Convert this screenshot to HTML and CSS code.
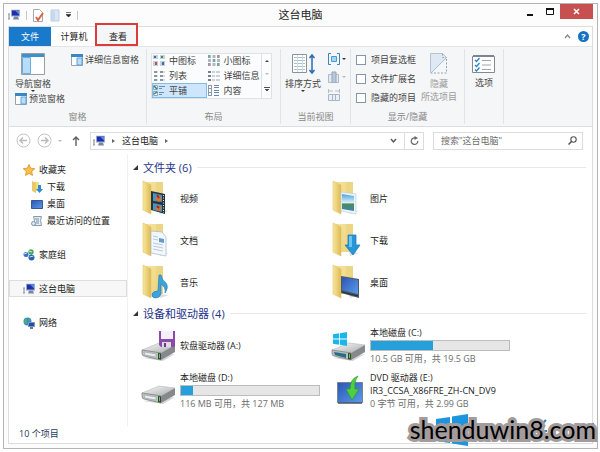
FILE: index.html
```html
<!DOCTYPE html>
<html lang="zh-CN">
<head>
  <meta charset="UTF-8">
  <title>这台电脑</title>
  <link rel="stylesheet" href="styles.css">
</head>
<body>
  <svg class="defs" aria-hidden="true">
    <defs>
      <linearGradient id="gold" x1="0" x2="1"><stop offset="0" stop-color="#f9e79b"/><stop offset="1" stop-color="#dcb954"/></linearGradient>
      <linearGradient id="gold2" x1="0" x2="1" y2="1"><stop offset="0" stop-color="#f5e3a0"/><stop offset="1" stop-color="#eed27a"/></linearGradient>
      <linearGradient id="metal" x1="0" y1="0" x2="1" y2="1"><stop offset="0" stop-color="#fafafa"/><stop offset="1" stop-color="#a9acac"/></linearGradient>
      <linearGradient id="blue" x1="0" y1="0" x2="1" y2="1"><stop offset="0" stop-color="#2b55b4"/><stop offset="1" stop-color="#5a9bea"/></linearGradient>
      <linearGradient id="sky" x1="0" y1="0" x2="0" y2="1"><stop offset="0" stop-color="#4ba3dd"/><stop offset=".5" stop-color="#d8effa"/><stop offset=".6" stop-color="#4d8b58"/><stop offset="1" stop-color="#3c83b4"/></linearGradient>
    </defs>
    <symbol id="pc" viewBox="0 0 12 11">
      <path d="M0 4h2v6H0z" fill="#8d96a8"/><path d="M1 5v4" stroke="#e6e9f0"/>
      <path d="M3 0h9v7H3z" fill="#9caac4"/><path d="M4 1h7v5H4z" fill="#1c2fb0"/><path d="M7 1h4v4z" fill="#5d86e6"/>
      <path d="M6 7h4l1 3H5z" fill="#7a86a2"/>
    </symbol>
    <symbol id="folder" viewBox="0 0 30 36">
      <path d="M17 30l10 1-9 3z" fill="#ddd"/>
      <path d="M3 2h18v28H8z" fill="url(#gold2)"/>
      <path d="M14 2h7v26l-7 2z" fill="#ecd583"/>
      <path d="M1 1l8 4v29l-8-4z" fill="url(#gold)" stroke="#e2c36a" stroke-width=".6"/>
    </symbol>
    <symbol id="drive" viewBox="0 0 36 20">
      <path d="M2 17l20 3 12-7z" fill="#d5d5d5"/>
      <path d="M1 9L18 2l16 2-14 8z" fill="url(#metal)" stroke="#b5b8b8" stroke-width=".6"/>
      <path d="M1 9l19 3v7L3 15q-2 0-2-3z" fill="#bfc3c5" stroke="#777" stroke-width=".7"/>
      <path d="M3 11l12 2v3L4 14z" fill="#eceff1" stroke="#8b9094" stroke-width=".5"/>
      <path d="M20 12l14-8v7l-14 8z" fill="#85898b"/>
      <path d="M17 12l3 .5v6l-3-.5z" fill="#294a2e"/><path d="M18 13l1 .3v4l-1-.3z" fill="#67cf54"/>
    </symbol>
    <symbol id="win" viewBox="0 0 32 32">
      <path d="M0 5l14-2v12H0zM16 2.600L32 0v15H16zM0 17h14v12L0 27zM16 17h16v15l-16-2.600z"/>
    </symbol>
    <symbol id="pane" viewBox="0 0 12 12">
      <path d="M.5.5h11v11H.5z" fill="#fff" stroke="#9aa1aa"/><path d="M0 0h12v3H0z" fill="#3986c2"/>
      <path d="M6 4h5v7H6z" fill="#b9defa" stroke="#5ba2dc"/>
    </symbol>
  </svg>

  <div class="window">
    <header class="titlebar">
      <div class="quick">
        <svg class="i12" viewBox="0 0 12 11"><use href="#pc"/></svg>
        <span class="sep"></span>
        <button aria-label="属性"><svg width="11" height="13" viewBox="0 0 11 13"><path d="M.5.5h6l3 3v9h-9z" fill="#fff" stroke="#a7a7ad"/><path d="M3 8l2 3 5-7" fill="none" stroke="#dc6340" stroke-width="2"/></svg></button>
        <button aria-label="新建文件夹"><svg width="10" height="13" viewBox="0 0 10 13"><path d="M1 1h8v11H1z" fill="#dbe6f4" stroke="#bccce0"/><path d="M1 1l4 2v9l-4-1z" fill="#c4d7ee"/></svg></button>
        <button aria-label="自定义"><svg width="5" height="6" viewBox="0 0 5 6"><path d="M0 .5h5M0 2.500h5L2.500 5z" stroke="#222" stroke-width=".6" fill="#222"/></svg></button>
        <span class="sep"></span>
      </div>
      <h1>这台电脑</h1>
      <div class="controls">
        <button aria-label="最小化"><svg width="8" height="9" viewBox="0 0 8 9"><path d="M1 7h6" stroke="#111" stroke-width="2"/></svg></button>
        <button aria-label="最大化"><svg width="8" height="8" viewBox="0 0 8 8"><path d="M.5 1.500h7v5h-7z" fill="none" stroke="#111"/><path d="M0 1h8" stroke="#111" stroke-width="2"/></svg></button>
        <button class="close" aria-label="关闭"><svg width="7" height="7" viewBox="0 0 7 7"><path d="M1 1l5 5M6 1L1 6" stroke="#fff" stroke-width="1.500"/></svg></button>
      </div>
    </header>

    <div class="client">
      <nav class="tabs">
        <button class="file">文件</button>
        <button>计算机</button>
        <button class="active">查看</button>
        <span class="grow"></span>
        <button class="mini" aria-label="折叠功能区"><svg width="7" height="5" viewBox="0 0 7 5"><path d="M1 4l2.500-3L6 4" fill="none" stroke="#888" stroke-width="1.300"/></svg></button>
        <button class="help" aria-label="帮助">?</button>
      </nav>

      <section class="ribbon">
        <div class="group panes">
          <div class="group-body">
            <div class="stack">
              <button class="big nav-pane">
                <svg width="24" height="22" viewBox="0 0 24 22"><path d="M.5.500h23v21H.5z" fill="#fff" stroke="#9a9da2"/><path d="M1 1h22v3H1z" fill="#4090c8"/><path d="M1.500 4.500h8v16h-8z" fill="#b7ddfb" stroke="#69addf"/></svg>
                导航窗格
                <i class="caret"></i>
              </button>
              <button class="line"><svg class="i12" viewBox="0 0 12 12"><use href="#pane"/></svg>预览窗格</button>
            </div>
            <button class="line"><svg class="i12" viewBox="0 0 12 12"><use href="#pane"/></svg>详细信息窗格</button>
          </div>
          <div class="caption">窗格</div>
        </div>

        <div class="group layout">
          <div class="group-body gallery">
            <div class="choices">
              <button><svg width="12" height="11" viewBox="0 0 12 11"><path d="M0 0h5v4H0zM7 0h5v4H7zM0 6h5v5H0zM7 6h5v5H7z" fill="#c6d0da"/><path d="M1 1h2v2H1zM9 7h2v3H9z" fill="#356eb8"/><path d="M2 7h2v3H2z" fill="#c34f48"/><path d="M8 1h2v2H8z" fill="#3c8c61"/></svg>中图标</button>
              <button><svg width="12" height="11" viewBox="0 0 12 11"><path d="M0 0h3v3H0zM4.500 0h3v3h-3zM9 0h3v3H9zM0 4h3v3H0zM4.500 4h3v3h-3zM9 4h3v3H9zM0 8h3v3H0zM4.500 8h3v3h-3zM9 8h3v3H9z" fill="#aeb9c4"/><path d="M1 0v3M6 4v3M10 8v3" stroke="#3e9a76"/><path d="M10 0v3M1 8v3" stroke="#c96560"/></svg>小图标</button>
              <button><svg width="12" height="10" viewBox="0 0 12 10"><path d="M1 0h3v2H1zM7 0h3v2H7zM1 4h3v2H1zM7 4h3v2H7zM1 8h3v2H1zM7 8h3v2H7z" fill="#8b96a2"/><path d="M4 1h1M10 1h2M4 5h1M10 5h2M4 9h1M10 9h2" stroke="#b4bdc6"/></svg>列表</button>
              <button><svg width="12" height="10" viewBox="0 0 12 10"><path d="M0 1h3M0 5h3M0 9h3" stroke="#76808c" stroke-width="2"/><path d="M4 1h3M8 1h4M4 5h3M8 5h4M4 9h3M8 9h4" stroke="#9aa6b4"/></svg>详细信息</button>
              <button class="picked"><svg width="12" height="11" viewBox="0 0 12 11"><path d="M.5.500h4v4h-4zM.5 6.500h4v4h-4z" fill="#eef4f4" stroke="#91a8b8"/><path d="M1 1l3 3M1 9l3-2" stroke="#348269" stroke-width="1.500"/><path d="M6 1.500h6M6 3.500h3M6 7.500h5M6 9.500h3" stroke="#6b8cb0"/></svg>平铺</button>
              <button><svg width="12" height="11" viewBox="0 0 12 11"><path d="M.5 0v11M3.500 0v11M0 .5h4M0 3.500h4M0 7.500h4M0 10.500h4" stroke="#8b9aab"/><path d="M6 .5h5M6 2.500h5M6 5.500h5M6 7.500h5M6 10.500h5" stroke="#6a86ae"/></svg>内容</button>
            </div>
            <div class="scroller"><i class="up"></i><i class="caret pale"></i><i class="caret lined"></i></div>
          </div>
          <div class="caption">布局</div>
        </div>

        <div class="group view">
          <div class="group-body">
            <button class="big">
              <svg width="24" height="22" viewBox="0 0 24 22"><path d="M1.500 1.500h14v18h-14z" fill="#fff" stroke="#8a9199"/><path d="M3 4.500h11M3 7.500h11M3 10.500h11M3 13.500h11M3 16.500h11" stroke="#a8bfd0"/><path d="M6.500 2v17M11.500 2v17" stroke="#cfdbe4"/><path d="M21 2v18M18.500 5L21 2l2.500 3M18.500 17l2.500 3 2.500-3" fill="none" stroke="#2c6cb0" stroke-width="1.500"/></svg>
              排序方式
              <i class="caret"></i>
            </button>
            <div class="stack minis">
              <button aria-label="分组依据"><svg width="12" height="12" viewBox="0 0 12 12"><path d="M3 .5H.5v11H3M9 .5h2.500v11H9" fill="none" stroke="#3f83bf"/><path d="M3.500 3.500h5v5h-5z" fill="#a6d5fa" stroke="#459ada"/></svg><i class="caret"></i></button>
              <button aria-label="添加列"><svg width="12" height="12" viewBox="0 0 12 12"><path d="M.5 3.500h10v8H.5z" fill="#e4eaf2" stroke="#b0b9c6"/><path d="M4 1h4v11H4z" fill="#b8c7da" stroke="#94a5bb"/></svg><i class="caret pale"></i></button>
              <button aria-label="调整列宽"><svg width="12" height="12" viewBox="0 0 12 12"><path d="M.5 5.500h11v6H.5zM4.500 6v5M7.500 6v5" fill="#eaf0f7" stroke="#a9b5c4"/><path d="M.5 0v4M11.500 0v4M1 2h4M7 2h4" stroke="#b3bdca"/></svg></button>
            </div>
          </div>
          <div class="caption">当前视图</div>
        </div>

        <div class="group show">
          <div class="group-body">
            <div class="checks">
              <label><input type="checkbox">项目复选框</label>
              <label><input type="checkbox">文件扩展名</label>
              <label><input type="checkbox">隐藏的项目</label>
            </div>
            <button class="big" disabled>
              <svg width="18" height="22" viewBox="0 0 18 22"><path d="M1 1h12l4 4L1 20z" fill="#dfe9f4"/><path d="M.5 20V.5h12l4 4" fill="none" stroke="#b5c2d2"/><path d="M12.500.5v4h4M16.500 6v14H1" fill="none" stroke="#96a0ad" stroke-dasharray="2 1.500"/><path d="M1 20L16 5" stroke="#a9bfd8"/></svg>
              <span>隐藏<br>所选项目</span>
            </button>
          </div>
          <div class="caption">显示/隐藏</div>
        </div>

        <div class="group options">
          <button class="big">
            <svg width="24" height="20" viewBox="0 0 24 20"><path d="M.5 2.500h22v16H.5z" fill="#fff" stroke="#85898f"/><path d="M1 2h21" stroke="#7c848e" stroke-width="2"/><path d="M3 6l1.500 1.500L7.500 4M3 11l1.500 1.500L7.500 9M3 15.500L4.500 17l3-3.500" fill="none" stroke="#2584c9" stroke-width="1.300"/><path d="M10 6.500h9M10 11h9M10 15.500h9" stroke="#9aa7b3"/></svg>
            选项
          </button>
        </div>
      </section>

      <div class="address-row">
        <button aria-label="后退"><svg width="15" height="15" viewBox="0 0 15 15"><circle cx="7.500" cy="7.500" r="6.500" fill="none" stroke="#c4c4c4"/><path d="M11 7.500H4M7 4.500l-3 3 3 3" fill="none" stroke="#bbb" stroke-width="1.500"/></svg></button>
        <button aria-label="前进"><svg width="15" height="15" viewBox="0 0 15 15"><circle cx="7.500" cy="7.500" r="6.500" fill="none" stroke="#c4c4c4"/><path d="M4 7.500h7M8 4.500l3 3-3 3" fill="none" stroke="#bbb" stroke-width="1.500"/></svg></button>
        <i class="caret pale"></i>
        <button class="up-btn" aria-label="上移"><svg width="8" height="10" viewBox="0 0 8 10"><path d="M4 10V1M1 4l3-3 3 3" fill="none" stroke="#606060" stroke-width="1.400"/></svg></button>
        <div class="address">
          <svg class="i12" viewBox="0 0 12 11"><use href="#pc"/></svg>
          <i class="arrow"></i>
          <a href="#">这台电脑</a>
          <i class="arrow"></i>
          <span class="grow"></span>
          <button aria-label="历史记录"><svg width="7" height="6" viewBox="0 0 7 6"><path d="M1 1l2.500 3L6 1" fill="none" stroke="#555" stroke-width="1.400"/></svg></button>
          <button class="refresh" aria-label="刷新"><svg width="9" height="10" viewBox="0 0 9 10"><path d="M6 2.200A3.300 3.300 0 1 0 7.800 5" fill="none" stroke="#666" stroke-width="1.200"/><path d="M4.500 0v4L8 2z" fill="#666"/></svg></button>
        </div>
        <div class="search">
          <input type="text" aria-label="搜索" placeholder='搜索"这台电脑"'>
          <svg width="9" height="9" viewBox="0 0 9 9"><circle cx="5.500" cy="3.500" r="2.700" fill="none" stroke="#555" stroke-width="1.100"/><path d="M3.500 5.500L.5 8.500" stroke="#555" stroke-width="1.500"/></svg>
        </div>
      </div>

      <div class="body">
        <aside class="tree">
          <ul>
            <li><a href="#"><svg width="12" height="12" viewBox="0 0 12 12"><path d="M6 .5l1.700 3.700 4 .5-3 2.700.8 4L6 9.400l-3.500 2 .8-4-3-2.700 4-.5z" fill="#fbc04a" stroke="#e08a25" stroke-width=".8"/></svg>收藏夹</a></li>
            <li class="sub"><a href="#"><svg width="12" height="12" viewBox="0 0 12 12"><path d="M1 1h7v9H3z" fill="#f2dc88"/><path d="M1 0l4 2v10l-4-2z" fill="#e8c968"/><path d="M7 4h3v4h2l-3.500 4L5 8h2z" fill="#2b8bd0"/></svg>下载</a></li>
            <li class="sub"><a href="#"><svg width="12" height="12" viewBox="0 0 12 12"><path d="M.5 2.500h11v8H.5z" fill="url(#blue)" stroke="#38588c"/></svg>桌面</a></li>
            <li class="sub"><a href="#"><svg width="12" height="12" viewBox="0 0 12 12"><path d="M2.500 1.500h8l-1 4 1 5h-8l1-5z" fill="#e6eef4" stroke="#8b98a5"/><path d="M4 4h4M5 6h3M5 8h3" stroke="#6b94bc"/><circle cx="2.500" cy="8.500" r="2" fill="#dce7ee" stroke="#8294a5"/></svg>最近访问的位置</a></li>
          </ul>
          <ul>
            <li><a href="#"><svg width="12" height="12" viewBox="0 0 12 12"><circle cx="3" cy="5.500" r="2.500" fill="#3b6fc4"/><circle cx="8" cy="3" r="2.700" fill="#49a95a"/><circle cx="8.500" cy="8.500" r="3" fill="#2961b3"/><path d="M1 5l3-1M6 2l3 1M6.500 8l4-1" stroke="#c5e8ee"/></svg>家庭组</a></li>
          </ul>
          <ul>
            <li class="current"><a href="#"><svg class="i12" viewBox="0 0 12 11"><use href="#pc"/></svg>这台电脑</a></li>
          </ul>
          <ul>
            <li><a href="#"><svg width="12" height="12" viewBox="0 0 12 12"><circle cx="4.500" cy="4.500" r="4" fill="#3c8bd0"/><path d="M2 1q3 1 2 4T1 6zM6 1l2 2-2 1z" fill="#4bb262"/><path d="M5 5h7v5H5z" fill="#8594b8"/><path d="M6 6h5v3H6z" fill="#1d4cae"/><path d="M7 10h3v2H7z" fill="#6b7a9b"/></svg>网络</a></li>
          </ul>
        </aside>

        <main class="items">
          <h2><i class="tri"></i>文件夹 (6)</h2>
          <div class="grid folders">
            <a href="#"><span class="icon"><svg width="30" height="36" viewBox="0 0 30 36"><use href="#folder"/><path d="M9 11l14 3v20L9 30z" fill="#26333b"/><path d="M11 13l9 2v7l-9-1zM11 23l9 2v7l-9-2z" fill="#4895c1"/><path d="M13 19l4-4 3 4-3 3zM13 29l4-4 3 3-3 3z" fill="#d3752e"/><path d="M15 15l2 3M15 26l2 2" stroke="#a42b2a" stroke-width="2"/><path d="M21.500 15v18" stroke="#dfe7ea" stroke-dasharray="1 1.500"/></svg></span>视频</a>
            <a href="#"><span class="icon"><svg width="30" height="36" viewBox="0 0 30 36"><use href="#folder"/><path d="M9 12l15 2v20L9 31z" fill="#edf4f7" stroke="#b8c9d0" stroke-width=".6"/><path d="M10 14l12 2v15l-12-2z" fill="url(#sky)"/></svg></span>图片</a>
            <a href="#"><span class="icon"><svg width="30" height="36" viewBox="0 0 30 36"><use href="#folder"/><path d="M9 9l11 1 4 5v19L9 31z" fill="#f2f7fc" stroke="#a6b7c7" stroke-width=".7"/><path d="M11 14l5 1M11 17l5 1M11 21l10 2M11 24l10 2M11 27l10 2" stroke="#a9bbd1" stroke-width=".8"/><path d="M17 16l5 1v4l-5-1z" fill="#629bcc"/></svg></span>文档</a>
            <a href="#"><span class="icon"><svg width="30" height="36" viewBox="0 0 30 36"><use href="#folder"/><path d="M16 13h8v10h4l-7 10-8-10h3z" fill="#2795da" stroke="#1875b4" stroke-width=".7"/><path d="M17 14h3v11h-3z" fill="#6cc5ef"/></svg></span>下载</a>
            <a href="#"><span class="icon"><svg width="30" height="36" viewBox="0 0 30 36"><use href="#folder"/><path d="M17 11h2q1 5 5 8 3 4-1 10 1-6-4-9v10q-1 4-6 4-4-1-3-4 1-3 6-3z" fill="#3ba4dd" stroke="#247fb8" stroke-width=".7"/></svg></span>音乐</a>
            <a href="#"><span class="icon"><svg width="30" height="36" viewBox="0 0 30 36"><use href="#folder"/><path d="M9 12l18 3v19L9 29z" fill="#4d5966"/><path d="M10 13l16 3v14l-16-4z" fill="url(#blue)"/><path d="M10 28l16 4" stroke="#1e2b3d"/></svg></span>桌面</a>
          </div>

          <h2><i class="tri"></i>设备和驱动器 (4)</h2>
          <div class="grid drives">
            <a href="#"><span class="icon"><svg width="36" height="32" viewBox="0 0 36 32"><use href="#drive" y="11" width="36" height="20"/><path d="M18 1h16v16H20l-2-2z" fill="#8b49a8"/><path d="M20 1h12v8H20z" fill="#f3eefa"/><path d="M21 12h9v5h-9z" fill="#dedbe5"/><path d="M23 13h2v4h-2z" fill="#653b83"/></svg></span>软盘驱动器 (A:)</a>
            <a href="#"><span class="icon"><svg width="36" height="32" viewBox="0 0 36 32"><use href="#drive" y="11" width="36" height="20"/><path d="M3 22l12 2v4L4 25z" fill="#246e89"/><use href="#win" x="2" y="2" width="14" height="14" fill="#19b7ea"/></svg></span>
              <span class="info"><b>本地磁盘 (C:)</b><span class="bar"><i style="width: 45%"></i></span><small>10.5 GB 可用，共 19.5 GB</small></span></a>
            <a href="#"><span class="icon"><svg width="36" height="32" viewBox="0 0 36 32"><use href="#drive" y="9" width="36" height="20"/></svg></span>
              <span class="info"><b>本地磁盘 (D:)</b><span class="bar"><i style="width: 9%"></i></span><small>116 MB 可用，共 127 MB</small></span></a>
            <a href="#"><span class="icon"><svg width="36" height="32" viewBox="0 0 36 32"><path d="M6.500 7.500h25v20h-25z" fill="url(#blue)" stroke="#758398"/><path d="M7 28h24" stroke="#49566c" stroke-width="1.500"/><path d="M27 1q-8 3-8 13h-4l6 11 7-11h-4q-1-8 3-13z" fill="#4ecf42" stroke="#229b2c" stroke-width=".7"/></svg></span>
              <span class="info"><b>DVD 驱动器 (E:)</b><b>IR3_CCSA_X86FRE_ZH-CN_DV9</b><small>0 字节 可用，共 2.99 GB</small></span></a>
          </div>
        </main>
      </div>

      <footer class="status">10 个项目</footer>
    </div>
  </div>

  <div class="watermark">
    <svg viewBox="0 0 190 32"><use href="#win" x="30" width="32" height="32"/><path d="M140 6l-6 6M139 11l-5 5M136 17h5M187 9v4M187 19v3" fill="none" stroke="#2d83ad" stroke-width="2"/></svg>
    <span>shenduwin8.com</span>
  </div>
</body>
</html>
```

FILE: styles.css
```css
* {
  box-sizing: border-box;
}

body {
  margin: 0;
  padding: 3px 2px 3px 3px;
  height: 100vh;
  background: #fff;
  color: #222;
  font-family: "Open Sans", "Noto Sans CJK SC", sans-serif;
  font-size: 9px;
  line-height: 13px;
  position: relative;
  overflow: hidden;
}

.defs {
  position: absolute;
  width: 0;
  height: 0;
}

svg {
  flex: none;
  display: block;
}

button {
  border: 0;
  padding: 0;
  background: none;
  color: inherit;
  font: inherit;
  display: flex;
  align-items: center;
  justify-content: center;
}

a {
  color: inherit;
  text-decoration: none;
}

.i12 {
  width: 12px;
  height: 12px;
}

.grow {
  flex: 1;
}

/* window frame */
.window {
  height: 100%;
  display: flex;
  flex-direction: column;
  padding: 0 4px 4px;
  background: #fcfcfc;
  border: 1px solid #b4b4b4;
}

.client {
  flex: 1;
  display: flex;
  flex-direction: column;
  border: 1px solid #dcdcdc;
  background: #fff;
}

.titlebar {
  height: 22px;
  display: grid;
  grid-template-columns: 1fr auto 1fr;
}

.titlebar h1 {
  margin: 0;
  font-size: 11px;
  font-weight: 400;
  line-height: 22px;
}

.quick {
  display: flex;
  align-items: center;
  gap: 6px;
}

.sep {
  width: 1px;
  height: 9px;
  background: #c8c8c8;
}

.controls {
  display: flex;
  justify-content: flex-end;
}

.controls button {
  width: 20px;
  height: 16px;
}

.controls .close {
  width: 33px;
  height: 15px;
  background: #c75050;
}

/* tabs */
.tabs {
  height: 19px;
  display: flex;
  align-items: stretch;
}

.tabs button {
  width: 46px;
}

.tabs .file {
  width: 42px;
  background: #1979ca;
  color: #fff;
}

.tabs .active {
  width: 43px;
  border: 2px solid #de3b3b;
  background: #f5f6f7;
  margin: -4px 0 0 -2px;
  padding: 3px 0 0 3px;
  z-index: 1;
}

.tabs .mini {
  width: 12px;
}

.tabs .help {
  width: 11px;
  height: 11px;
  margin: 4px 3px 0 5px;
  border-radius: 50%;
  background: #1472c4;
  color: #fff;
  font-weight: 700;
}

/* ribbon */
.ribbon {
  display: flex;
  height: 81px;
  padding: 2px 0;
  background: #f5f6f7;
  border-top: 1px solid #e3e4e5;
  border-bottom: 1px solid #dcdddf;
  color: #444;
}

.group {
  display: flex;
  flex-direction: column;
  padding: 4px 4px 0;
  border-right: 1px solid #e2e3e4;
}

.group-body {
  flex: 1;
  display: flex;
  align-items: flex-start;
}

.caption {
  text-align: center;
  color: #888;
  line-height: 14px;
}

.panes {
  width: 138px;
}

.panes .group-body {
  justify-content: space-between;
  padding: 0 3px 0 2px;
}

.stack {
  display: flex;
  flex-direction: column;
}

.line {
  gap: 2px;
}

.big {
  flex-direction: column;
}

.big svg {
  margin-bottom: 2px;
}

.big:disabled {
  color: #9a9a9a;
}

.nav-pane {
  align-self: flex-start;
}

.caret {
  width: 0;
  height: 0;
  border: 2px solid transparent;
  border-top: 2px solid #333;
  border-bottom: 0;
}

.caret.pale {
  border-top-color: #b9b9b9;
}

.layout {
  width: 134px;
}

.gallery {
  flex: none;
  height: 46px;
  margin: 0 4px 11px 0;
  border: 1px solid #dfe1e3;
  background: #fbfcfd;
}

.choices {
  flex: 1;
  height: 100%;
  display: grid;
  grid-template-columns: 1fr 1fr;
  grid-auto-rows: 15px;
  align-content: end;
}

.choices button {
  justify-content: flex-start;
  gap: 4px;
  padding-left: 1px;
}

.choices .picked {
  background: #cde6fb;
  border: 1px solid #84bce8;
  padding-left: 0;
}

.scroller {
  width: 10px;
  height: 100%;
  display: flex;
  flex-direction: column;
  align-items: center;
  justify-content: space-around;
  border-left: 1px solid #dfe1e3;
}

.up {
  border: 2px solid transparent;
  border-bottom-color: #444;
  border-top: 0;
}

.lined {
  width: 6px;
  height: 5px;
  border: 0;
  border-top: 1px solid #456;
  background: linear-gradient(#456, #456) center 1px / 4px 1px no-repeat, linear-gradient(#456, #456) center 2px / 2px 1px no-repeat;
}

.view {
  width: 70px;
}

.view .group-body {
  justify-content: space-between;
}

.minis {
  gap: 6px;
}

.minis button {
  gap: 2px;
  justify-content: flex-start;
}

.show {
  width: 114px;
}

.show .group-body {
  justify-content: space-between;
}

.show .big {
  margin-right: 3px;
}

.checks {
  display: flex;
  flex-direction: column;
  gap: 6px;
}

.checks label {
  display: flex;
  align-items: center;
  gap: 5px;
}

.checks input {
  appearance: none;
  width: 10px;
  height: 10px;
  margin: 0 0 0 1px;
  border: 1px solid #8496ac;
  background: #fff;
}

.options {
  padding: 5px 7px;
}

/* address bar */
.address-row {
  display: flex;
  align-items: center;
  gap: 6px;
  height: 27px;
  padding: 0 9px 0 7px;
}

.up-btn {
  margin: 0 4px;
}

.address {
  flex: 1;
  height: 18px;
  display: flex;
  align-items: center;
  gap: 7px;
  padding-left: 2px;
  border: 1px solid #dcdcdc;
}

.address .refresh {
  width: 19px;
  height: 100%;
  border-left: 1px solid #dcdcdc;
}

.arrow {
  border: 2px solid transparent;
  border-left: 3px solid #666;
  border-right: 0;
}

.search {
  width: 150px;
  height: 18px;
  margin-left: 3px;
  display: flex;
  align-items: center;
  padding: 0 5px 0 7px;
  border: 1px solid #dcdcdc;
}

.search input {
  flex: 1;
  min-width: 0;
  padding: 0;
  border: 0;
  outline: 0;
  font: inherit;
}

.search input::placeholder {
  color: #6d6d6d;
}

/* content */
.body {
  flex: 1;
  display: flex;
}

.tree {
  width: 119px;
  padding-top: 7px;
  border-right: 1px solid #f1f1f1;
}

.tree ul {
  margin: 0 0 17px;
  padding: 0;
  list-style: none;
}

.tree a {
  height: 17px;
  display: flex;
  align-items: center;
  gap: 4px;
  padding-left: 14px;
}

.tree .sub a {
  padding-left: 22px;
}

.tree .current a {
  background: #f7f7f7;
  border: 1px solid #dedede;
  padding-left: 13px;
}

.items {
  flex: 1;
  padding: 3px 6px 0 5px;
}

.items h2 {
  display: flex;
  align-items: center;
  gap: 5px;
  margin: 0;
  height: 20px;
  color: #1e3287;
  font-size: 11px;
  font-weight: 400;
}

.items h2::after {
  content: "";
  flex: 1;
  height: 1px;
  background: #e8e8e8;
}

.tri {
  border-left: 5px solid transparent;
  border-bottom: 5px solid #333;
}

.grid {
  display: grid;
  grid-template-columns: 190px 190px;
}

.grid a {
  display: flex;
  align-items: center;
}

.folders {
  grid-auto-rows: 42px;
}

.drives {
  grid-auto-rows: 45px;
}

.icon {
  width: 47px;
  display: flex;
  padding-left: 9px;
}

.drives .icon {
  padding-left: 8px;
}

.info {
  width: 140px;
  display: flex;
  flex-direction: column;
}

.info b {
  font-weight: 400;
}

.info small {
  font-size: 9px;
  color: #6d6d6d;
}

.bar {
  height: 11px;
  margin: 1px 0;
  border: 1px solid #bcbcbc;
  background: #e6e6e6;
}

.bar i {
  display: block;
  height: 100%;
  background: #26a0da;
}

.status {
  height: 17px;
  padding-left: 10px;
  line-height: 15px;
  color: #1e395b;
}

/* site mark laid over the window corner */
.watermark {
  position: absolute;
  right: 4px;
  bottom: 9px;
  color: #000;
}

.watermark svg {
  position: absolute;
  right: 0;
  top: -1px;
  width: 190px;
  height: 32px;
  fill: #1c94e0;
}

.watermark span {
  display: block;
  position: relative;
  font-family: Lato, "Open Sans", sans-serif;
  font-size: 25px;
  line-height: 28px;
  -webkit-text-stroke: 6px #a39c9c;
  paint-order: stroke fill;
}
```
